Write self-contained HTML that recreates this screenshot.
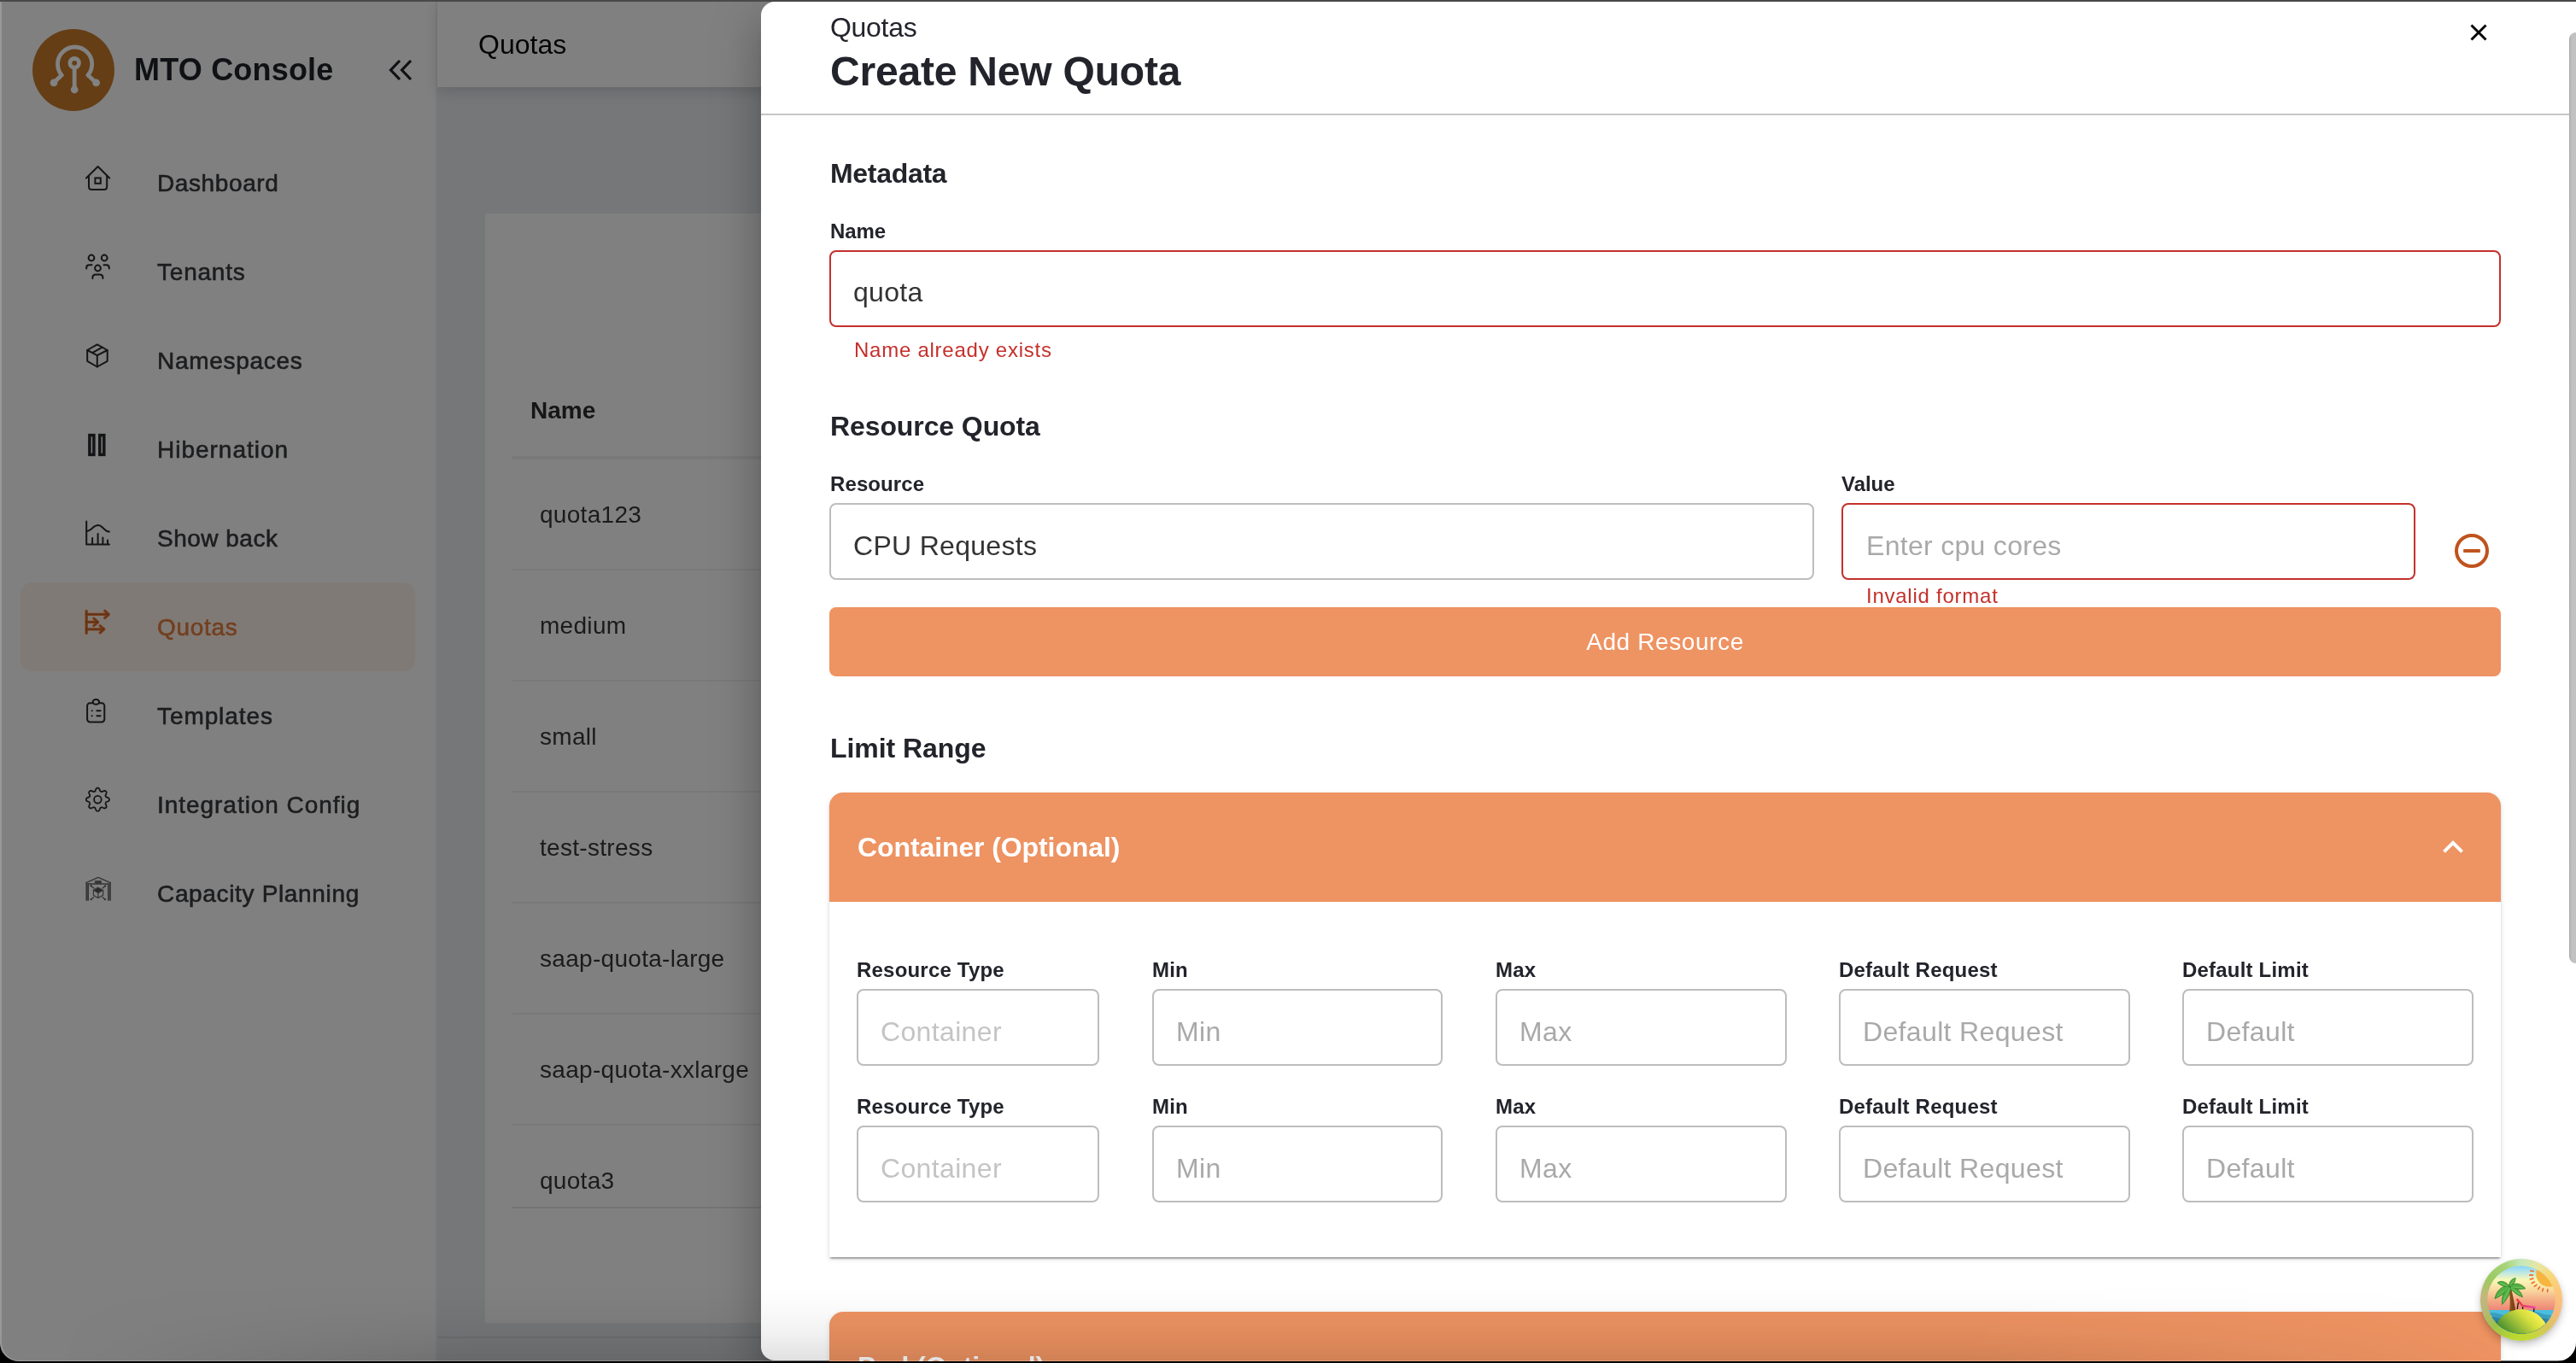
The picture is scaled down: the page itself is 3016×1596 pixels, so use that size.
<!DOCTYPE html>
<html lang="en"><head><meta charset="utf-8"><title>MTO Console - Quotas</title>
<style>
html,body{margin:0;padding:0;background:#000;}
@media (max-width:2000px){html{zoom:0.5;}}
body{width:3016px;height:1596px;overflow:hidden;position:relative;font-family:"Liberation Sans",Arial,Helvetica,sans-serif;}
#win{position:absolute;left:0;top:0;width:3016px;height:1594px;overflow:hidden;background:#757779;border-radius:0 0 22px 22px;}
.t{position:absolute;white-space:nowrap;line-height:1;will-change:transform;}
.b{position:absolute;box-sizing:border-box;}
.bold{font-weight:700;}
.side{color:#1c1d1f;}
.dk{color:#23242b;}
.inp{border:2px solid #bdbdbd;border-radius:8px;background:#fff;}
.err{border-color:#c4302b;}
.ph{color:#a9a9a9;}
.phd{color:#c4c4c4;}
.red{color:#c4302b;}
svg{position:absolute;overflow:visible;}
</style></head><body><div id="win">
<div class="b " style="left:0px;top:0px;width:510px;height:1594px;background:#808080;"></div>
<div class="b " style="left:510px;top:0px;width:2px;height:1594px;background:#787a7b;"></div>
<div class="b " style="left:512px;top:0px;width:2504px;height:102px;background:#808080;box-shadow:0 6px 14px rgba(0,0,0,0.13);"></div>
<div class="b " style="left:568px;top:250px;width:2448px;height:1299px;background:#808080;"></div>
<div class="b " style="left:512px;top:1565px;width:2504px;height:2px;background:#6c6e70;"></div>
<svg style="left:38px;top:34px" width="96" height="96" viewBox="0 0 96 96">
<circle cx="48" cy="48" r="48" fill="#653e16"/>
<g fill="none" stroke="#828282" stroke-width="4.8" stroke-linecap="round">
<path d="M34.2 54 A20.1 20.1 0 1 1 65 54"/>
<path d="M34.2 54 L25.2 62.6 M65 54 L74.2 62.6"/>
<circle cx="49.2" cy="39.8" r="5.3"/>
<path d="M49.2 45.5 V70"/>
</g>
<g fill="#828282"><circle cx="25" cy="62.9" r="4.4"/><circle cx="74.6" cy="62.9" r="4.4"/><circle cx="49.2" cy="71" r="4.4"/></g>
</svg>
<div class="t bold" style="left:156.8px;top:63.5px;font-size:36px;color:#101114;letter-spacing:0.2px;">MTO Console</div>
<svg style="left:454px;top:68px" width="32" height="28" viewBox="0 0 32 28" fill="none" stroke="#101114" stroke-width="3.2" stroke-linecap="butt" stroke-linejoin="miter">
<path d="M14 3 L3.5 14 L14 25"/><path d="M27 3 L16.5 14 L27 25"/></svg>
<div class="b " style="left:24px;top:682px;width:462px;height:104px;background:#807a76;border-radius:14px;"></div>
<div class="t side" style="left:184.0px;top:201.3px;font-size:28px;letter-spacing:0.61px;-webkit-text-stroke:0.6px;">Dashboard</div>
<div class="t side" style="left:184.0px;top:305.3px;font-size:28px;letter-spacing:0.78px;-webkit-text-stroke:0.6px;">Tenants</div>
<div class="t side" style="left:184.0px;top:409.3px;font-size:28px;letter-spacing:0.71px;-webkit-text-stroke:0.6px;">Namespaces</div>
<div class="t side" style="left:184.0px;top:513.3px;font-size:28px;letter-spacing:0.99px;-webkit-text-stroke:0.6px;">Hibernation</div>
<div class="t side" style="left:184.0px;top:617.3px;font-size:28px;letter-spacing:0.49px;-webkit-text-stroke:0.6px;">Show back</div>
<div class="t side" style="left:184.0px;top:721.3px;font-size:28px;color:#733f1f;letter-spacing:0.7px;-webkit-text-stroke:0.6px;">Quotas</div>
<div class="t side" style="left:184.0px;top:825.3px;font-size:28px;letter-spacing:0.91px;-webkit-text-stroke:0.6px;">Templates</div>
<div class="t side" style="left:184.0px;top:929.3px;font-size:28px;letter-spacing:0.96px;-webkit-text-stroke:0.6px;">Integration Config</div>
<div class="t side" style="left:184.0px;top:1033.3px;font-size:28px;letter-spacing:0.66px;-webkit-text-stroke:0.6px;">Capacity Planning</div>
<svg style="left:0;top:0" width="520" height="1596" viewBox="0 0 520 1596" fill="none" stroke="#141517" stroke-width="2" stroke-linecap="round" stroke-linejoin="round">
<!-- dashboard -->
<path d="M101 208.5 L114.6 195 L128.2 208.5"/>
<path d="M104 206 V218.5 Q104 222 107.5 222 H121.7 Q125.2 222 125.2 218.5 V206"/>
<rect x="111.4" y="208.4" width="6.4" height="6.4" stroke-linejoin="miter"/>
<!-- tenants -->
<circle cx="107" cy="302" r="3.4"/><circle cx="122.2" cy="302" r="3.4"/><circle cx="114.5" cy="314" r="3.4"/>
<path d="M101.2 314.6 V313.5 Q101.2 310.3 104.6 310.3 H107.5"/>
<path d="M127.8 314.6 V313.5 Q127.8 310.3 124.4 310.3 H121.5"/>
<path d="M108.4 326 V325 Q108.4 321.4 112 321.4 H117 Q120.4 321.4 120.4 325 V326"/>
<!-- namespaces -->
<path d="M113.8 403.4 L125.7 410 V422.8 L113.8 429.5 L102.2 422.8 V410 Z"/>
<path d="M102.2 410 L113.8 416.2 L125.7 410 M113.8 416.2 V429.5 M108 413.1 L119.75 406.7"/>
<!-- hibernation -->
<g stroke-width="3.5" stroke-linejoin="miter" stroke-linecap="butt"><rect x="104.9" y="509.6" width="5" height="22.8"/><rect x="116.8" y="509.6" width="5" height="22.8"/></g>
<!-- show back -->
<path d="M101.2 610.5 V637.4 H128"/>
<path d="M108.1 630 V637 M114.6 625 V637 M120.4 629.4 V637 M126 632.5 V637"/>
<path d="M101.2 622 C107 622 109 615 114.8 615 C120.5 615 122 622.6 128 622.6"/>
<!-- quotas -->
<g stroke="#7a3d17" stroke-width="3.3">
<path d="M101.2 715.4 V741.4"/>
<path d="M101.2 719.4 H127 M122.7 715.3 L127.3 719.4 L122.7 723.5"/>
<path d="M101.2 728.4 H114.4 M109.9 724.2 L114.7 728.4 L109.9 732.6"/>
<path d="M101.2 736.8 H121.6 M117.1 732.7 L121.9 736.8 L117.1 740.9"/>
</g>
<g stroke="#52301c" stroke-width="0.9">
<path d="M101.2 715.4 V741.4"/>
<path d="M101.2 719.4 H127 M122.7 715.3 L127.3 719.4 L122.7 723.5"/>
<path d="M101.2 728.4 H114.4 M109.9 724.2 L114.7 728.4 L109.9 732.6"/>
<path d="M101.2 736.8 H121.6 M117.1 732.7 L121.9 736.8 L117.1 740.9"/>
</g>
<!-- templates -->
<rect x="102.1" y="823.3" width="20.2" height="22.1" rx="3.3"/>
<ellipse cx="112.4" cy="821.9" rx="3.7" ry="2.9" fill="#808080"/>
<path d="M107.7 832.3 h0.1 M107.7 838.2 h0.1 M113.4 832.3 H117.6 M113.4 838.2 H117.6"/>
<!-- gear -->
<circle cx="114.4" cy="936.2" r="4.3" stroke-width="1.8"/>
<path stroke-width="1.8" d="M114.40 922.70 L114.84 922.71 L115.28 922.73 L115.70 922.96 L116.08 923.45 L116.41 924.01 L116.70 924.63 L116.95 925.24 L117.18 925.83 L117.39 926.35 L117.65 926.64 L117.96 926.75 L118.27 926.87 L118.57 927.00 L118.87 927.14 L119.25 927.12 L119.77 926.90 L120.34 926.65 L120.96 926.39 L121.59 926.16 L122.23 926.00 L122.84 925.92 L123.30 926.05 L123.63 926.35 L123.95 926.65 L124.25 926.97 L124.55 927.30 L124.68 927.76 L124.60 928.37 L124.44 929.01 L124.21 929.64 L123.95 930.26 L123.70 930.83 L123.48 931.35 L123.46 931.73 L123.60 932.03 L123.73 932.33 L123.85 932.64 L123.96 932.95 L124.25 933.21 L124.77 933.42 L125.36 933.65 L125.97 933.90 L126.59 934.19 L127.15 934.52 L127.64 934.90 L127.87 935.32 L127.89 935.76 L127.90 936.20 L127.89 936.64 L127.87 937.08 L127.64 937.50 L127.15 937.88 L126.59 938.21 L125.97 938.50 L125.36 938.75 L124.77 938.98 L124.25 939.19 L123.96 939.45 L123.85 939.76 L123.73 940.07 L123.60 940.37 L123.46 940.67 L123.48 941.05 L123.70 941.57 L123.95 942.14 L124.21 942.76 L124.44 943.39 L124.60 944.03 L124.68 944.64 L124.55 945.10 L124.25 945.43 L123.95 945.75 L123.63 946.05 L123.30 946.35 L122.84 946.48 L122.23 946.40 L121.59 946.24 L120.96 946.01 L120.34 945.75 L119.77 945.50 L119.25 945.28 L118.87 945.26 L118.57 945.40 L118.27 945.53 L117.96 945.65 L117.65 945.76 L117.39 946.05 L117.18 946.57 L116.95 947.16 L116.70 947.77 L116.41 948.39 L116.08 948.95 L115.70 949.44 L115.28 949.67 L114.84 949.69 L114.40 949.70 L113.96 949.69 L113.52 949.67 L113.10 949.44 L112.72 948.95 L112.39 948.39 L112.10 947.77 L111.85 947.16 L111.62 946.57 L111.41 946.05 L111.15 945.76 L110.84 945.65 L110.53 945.53 L110.23 945.40 L109.93 945.26 L109.55 945.28 L109.03 945.50 L108.46 945.75 L107.84 946.01 L107.21 946.24 L106.57 946.40 L105.96 946.48 L105.50 946.35 L105.17 946.05 L104.85 945.75 L104.55 945.43 L104.25 945.10 L104.12 944.64 L104.20 944.03 L104.36 943.39 L104.59 942.76 L104.85 942.14 L105.10 941.57 L105.32 941.05 L105.34 940.67 L105.20 940.37 L105.07 940.07 L104.95 939.76 L104.84 939.45 L104.55 939.19 L104.03 938.98 L103.44 938.75 L102.83 938.50 L102.21 938.21 L101.65 937.88 L101.16 937.50 L100.93 937.08 L100.91 936.64 L100.90 936.20 L100.91 935.76 L100.93 935.32 L101.16 934.90 L101.65 934.52 L102.21 934.19 L102.83 933.90 L103.44 933.65 L104.03 933.42 L104.55 933.21 L104.84 932.95 L104.95 932.64 L105.07 932.33 L105.20 932.03 L105.34 931.73 L105.32 931.35 L105.10 930.83 L104.85 930.26 L104.59 929.64 L104.36 929.01 L104.20 928.37 L104.12 927.76 L104.25 927.30 L104.55 926.97 L104.85 926.65 L105.17 926.35 L105.50 926.05 L105.96 925.92 L106.57 926.00 L107.21 926.16 L107.84 926.39 L108.46 926.65 L109.03 926.90 L109.55 927.12 L109.93 927.14 L110.23 927.00 L110.53 926.87 L110.84 926.75 L111.15 926.64 L111.41 926.35 L111.62 925.83 L111.85 925.24 L112.10 924.63 L112.39 924.01 L112.72 923.45 L113.10 922.96 L113.52 922.73 L113.96 922.71 L114.40 922.70 Z"/>
<!-- capacity -->
<g stroke="#353535" stroke-width="1.5" stroke-linecap="round" stroke-linejoin="round">
<path d="M101 1033.6 L114.9 1027.4 L129.3 1033.6"/>
<path d="M101.3 1034 V1054 M103.2 1035 V1054 M126.9 1035 V1054 M129 1034 V1054" stroke-width="1.7"/>
<path d="M103.2 1035 H126.9" stroke-width="1.3"/>
<rect x="111.5" y="1031.6" width="7" height="2.6" fill="#353535" stroke-width="0.8"/>
<path d="M114.9 1039.2 L120.7 1042.4 L114.9 1045.7 L109.4 1042.4 Z" fill="#2b2b2b" stroke-width="1"/>
<path d="M109.4 1042.4 V1048.3 L114.9 1051.5 L120.7 1048.3 V1042.4 M114.9 1045.7 V1051.5" stroke-width="1.2"/>
<path d="M110 1040 L106.6 1037.3 M120.1 1040 L123.1 1037.4 M109.8 1050.6 L106.7 1053.1 M120.1 1050.6 L122.9 1053.1" stroke-width="1.3"/>
<g fill="#353535" stroke="none"><circle cx="106.6" cy="1037.3" r="1.2"/><circle cx="123.1" cy="1037.4" r="1.2"/><circle cx="106.7" cy="1053.1" r="1.2"/><circle cx="122.9" cy="1053.1" r="1.2"/></g>
</g>
</svg>
<div class="t " style="left:559.5px;top:36.3px;font-size:32px;color:#050505;">Quotas</div>
<div class="t bold" style="left:620.8px;top:467.1px;font-size:28px;color:#161616;">Name</div>
<div class="b " style="left:600px;top:534px;width:2416px;height:4px;background:#797979;"></div>
<div class="t " style="left:632.0px;top:588.5px;font-size:28px;color:#1b1b1b;letter-spacing:0.3px;">quota123</div>
<div class="b " style="left:600px;top:665.5px;width:2416px;height:2.0px;background:#797979;"></div>
<div class="t " style="left:632.0px;top:718.5px;font-size:28px;color:#1b1b1b;letter-spacing:0.3px;">medium</div>
<div class="b " style="left:600px;top:795.5px;width:2416px;height:2.0px;background:#797979;"></div>
<div class="t " style="left:632.0px;top:848.5px;font-size:28px;color:#1b1b1b;letter-spacing:0.3px;">small</div>
<div class="b " style="left:600px;top:925.5px;width:2416px;height:2.0px;background:#797979;"></div>
<div class="t " style="left:632.0px;top:978.5px;font-size:28px;color:#1b1b1b;letter-spacing:0.3px;">test-stress</div>
<div class="b " style="left:600px;top:1055.5px;width:2416px;height:2.0px;background:#797979;"></div>
<div class="t " style="left:632.0px;top:1108.5px;font-size:28px;color:#1b1b1b;letter-spacing:0.3px;">saap-quota-large</div>
<div class="b " style="left:600px;top:1185.5px;width:2416px;height:2.0px;background:#797979;"></div>
<div class="t " style="left:632.0px;top:1238.5px;font-size:28px;color:#1b1b1b;letter-spacing:0.3px;">saap-quota-xxlarge</div>
<div class="b " style="left:600px;top:1315.5px;width:2416px;height:2.0px;background:#797979;"></div>
<div class="t " style="left:632.0px;top:1368.5px;font-size:28px;color:#1b1b1b;letter-spacing:0.3px;">quota3</div>
<div class="b " style="left:600px;top:1413px;width:2416px;height:2px;background:#747474;"></div>
<div class="b" style="left:891px;top:2px;width:2140px;height:1591px;background:#fff;border-radius:16px 0 0 16px;box-shadow:0 16px 20px -10px rgba(0,0,0,0.2),0 32px 48px 4px rgba(0,0,0,0.14),0 12px 60px 10px rgba(0,0,0,0.12);"></div>
<div class="t " style="left:971.8px;top:16.0px;font-size:32px;color:#23242b;letter-spacing:-0.3px;">Quotas</div>
<div class="t bold dk" style="left:971.8px;top:60.0px;font-size:48px;letter-spacing:-0.2px;">Create New Quota</div>
<div class="b " style="left:891px;top:133px;width:2125px;height:2px;background:#c6c6c6;"></div>
<svg style="left:2892px;top:28px" width="20" height="20" viewBox="0 0 20 20" stroke="#000" stroke-width="2.9" fill="none"><path d="M1.5 1.5 L18.5 18.5 M18.5 1.5 L1.5 18.5"/></svg>
<div class="t bold dk" style="left:971.8px;top:186.5px;font-size:32px;letter-spacing:-0.3px;">Metadata</div>
<div class="t bold dk" style="left:971.8px;top:258.5px;font-size:24px;letter-spacing:-0.1px;">Name</div>
<div class="b inp err" style="left:971px;top:293px;width:1957px;height:90px;"></div>
<div class="t " style="left:999.3px;top:326.3px;font-size:32px;color:#333333;letter-spacing:0.3px;">quota</div>
<div class="t red" style="left:1000.0px;top:397.9px;font-size:24px;letter-spacing:0.75px;">Name already exists</div>
<div class="t bold dk" style="left:971.8px;top:483.1px;font-size:32px;letter-spacing:-0.1px;">Resource Quota</div>
<div class="t bold dk" style="left:971.8px;top:555.1px;font-size:24px;letter-spacing:0.1px;">Resource</div>
<div class="t bold dk" style="left:2156.3px;top:554.7px;font-size:24px;letter-spacing:-0.05px;">Value</div>
<div class="b inp" style="left:971px;top:589px;width:1153px;height:90px;"></div>
<div class="t " style="left:999.3px;top:623.0px;font-size:32px;color:#333333;letter-spacing:0.3px;">CPU Requests</div>
<div class="b inp err" style="left:2156px;top:589px;width:672px;height:90px;"></div>
<div class="t ph" style="left:2185.0px;top:622.9px;font-size:32px;letter-spacing:0.3px;">Enter cpu cores</div>
<div class="t red" style="left:2184.8px;top:685.5px;font-size:24px;letter-spacing:0.75px;">Invalid format</div>
<svg style="left:2872px;top:623px" width="44" height="44" viewBox="0 0 44 44" fill="none" stroke="#c0531d" stroke-width="4"><circle cx="22" cy="22" r="18"/><path d="M12.2 22 H31.8"/></svg>
<div class="b " style="left:971px;top:711px;width:1957px;height:80.5px;background:#ee9362;border-radius:8px;"></div>
<div class="t" style="left:971px;width:1957px;text-align:center;top:737.8px;font-size:28px;color:#fff;letter-spacing:0.6px;">Add Resource</div>
<div class="t bold dk" style="left:971.8px;top:859.9px;font-size:32px;letter-spacing:-0.05px;">Limit Range</div>
<div class="b" style="left:971px;top:928px;width:1957px;height:544px;background:#fff;border-radius:16px 16px 0 0;box-shadow:0 4px 2px -2px rgba(0,0,0,0.2),0 2px 2px 0 rgba(0,0,0,0.14),0 2px 6px 0 rgba(0,0,0,0.12);"></div>
<div class="b " style="left:971px;top:928px;width:1957px;height:128px;background:#ee9362;border-radius:16px 16px 0 0;"></div>
<div class="t bold" style="left:1004.0px;top:975.9px;font-size:32px;color:#fff;letter-spacing:-0.1px;">Container (Optional)</div>
<svg style="left:2848px;top:968px" width="48" height="48" viewBox="0 0 24 24" fill="#fff"><path d="M12 8l-6 6 1.41 1.41L12 10.83l4.59 4.58L18 14z"/></svg>
<div class="t bold dk" style="left:1003.3px;top:1124.0px;font-size:24px;letter-spacing:0.2px;">Resource Type</div>
<div class="b inp" style="left:1003px;top:1158px;width:284px;height:90px;"></div>
<div class="t phd" style="left:1030.6px;top:1191.5px;font-size:32px;letter-spacing:0.35px;">Container</div>
<div class="t bold dk" style="left:1349.3px;top:1124.0px;font-size:24px;letter-spacing:0.2px;">Min</div>
<div class="b inp" style="left:1349px;top:1158px;width:340px;height:90px;"></div>
<div class="t ph" style="left:1376.6px;top:1191.5px;font-size:32px;letter-spacing:0.35px;">Min</div>
<div class="t bold dk" style="left:1751.3px;top:1124.0px;font-size:24px;letter-spacing:0.2px;">Max</div>
<div class="b inp" style="left:1751px;top:1158px;width:341px;height:90px;"></div>
<div class="t ph" style="left:1778.6px;top:1191.5px;font-size:32px;letter-spacing:0.35px;">Max</div>
<div class="t bold dk" style="left:2153.3px;top:1124.0px;font-size:24px;letter-spacing:0.2px;">Default Request</div>
<div class="b inp" style="left:2153px;top:1158px;width:341px;height:90px;"></div>
<div class="t ph" style="left:2180.6px;top:1191.5px;font-size:32px;letter-spacing:0.35px;">Default Request</div>
<div class="t bold dk" style="left:2555.3px;top:1124.0px;font-size:24px;letter-spacing:0.2px;">Default Limit</div>
<div class="b inp" style="left:2555px;top:1158px;width:341px;height:90px;"></div>
<div class="t ph" style="left:2582.6px;top:1191.5px;font-size:32px;letter-spacing:0.35px;">Default</div>
<div class="t bold dk" style="left:1003.3px;top:1284.0px;font-size:24px;letter-spacing:0.2px;">Resource Type</div>
<div class="b inp" style="left:1003px;top:1318px;width:284px;height:90px;"></div>
<div class="t phd" style="left:1030.6px;top:1351.5px;font-size:32px;letter-spacing:0.35px;">Container</div>
<div class="t bold dk" style="left:1349.3px;top:1284.0px;font-size:24px;letter-spacing:0.2px;">Min</div>
<div class="b inp" style="left:1349px;top:1318px;width:340px;height:90px;"></div>
<div class="t ph" style="left:1376.6px;top:1351.5px;font-size:32px;letter-spacing:0.35px;">Min</div>
<div class="t bold dk" style="left:1751.3px;top:1284.0px;font-size:24px;letter-spacing:0.2px;">Max</div>
<div class="b inp" style="left:1751px;top:1318px;width:341px;height:90px;"></div>
<div class="t ph" style="left:1778.6px;top:1351.5px;font-size:32px;letter-spacing:0.35px;">Max</div>
<div class="t bold dk" style="left:2153.3px;top:1284.0px;font-size:24px;letter-spacing:0.2px;">Default Request</div>
<div class="b inp" style="left:2153px;top:1318px;width:341px;height:90px;"></div>
<div class="t ph" style="left:2180.6px;top:1351.5px;font-size:32px;letter-spacing:0.35px;">Default Request</div>
<div class="t bold dk" style="left:2555.3px;top:1284.0px;font-size:24px;letter-spacing:0.2px;">Default Limit</div>
<div class="b inp" style="left:2555px;top:1318px;width:341px;height:90px;"></div>
<div class="t ph" style="left:2582.6px;top:1351.5px;font-size:32px;letter-spacing:0.35px;">Default</div>
<div class="b " style="left:971px;top:1536px;width:1957px;height:128px;background:#ee9362;border-radius:16px 16px 0 0;box-shadow:0 2px 6px rgba(0,0,0,0.12);"></div>
<div class="t bold" style="left:1004.0px;top:1583.9px;font-size:32px;color:#fff;letter-spacing:-0.1px;">Pod (Optional)</div>
<div class="b " style="left:0px;top:1506px;width:3016px;height:88px;background:linear-gradient(to bottom,rgba(0,0,0,0) 0,rgba(0,0,0,0.02) 32%,rgba(0,0,0,0.055) 64%,rgba(0,0,0,0.12) 100%);-webkit-mask-image:linear-gradient(to right,transparent 70px,#000 560px,#000 2300px,transparent 2960px);mask-image:linear-gradient(to right,transparent 70px,#000 560px,#000 2300px,transparent 2960px);pointer-events:none;"></div>
<div class="b " style="left:3008px;top:38px;width:16px;height:1090px;background:linear-gradient(to right,#ababab 0,#c1c1c1 3px,#c3c3c3 100%);border-radius:8px;"></div>
<div class="b" style="left:2904px;top:1474px;width:96px;height:96px;border-radius:50%;box-shadow:0 5px 10px rgba(0,0,0,0.22),0 1px 3px rgba(0,0,0,0.12);background:conic-gradient(from 0deg,#c6e8bb 0deg,#e9e6a0 28deg,#f8d77a 50deg,#fdc27c 85deg,#f5b980 110deg,#d9c45e 135deg,#c3d838 165deg,#bcd82f 190deg,#9cc24a 225deg,#b9b878 255deg,#c3b77c 275deg,#9ccb62 305deg,#a6d478 335deg,#c6e8bb 360deg);"></div>
<svg style="left:2904px;top:1474px" width="96" height="96" viewBox="0 0 96 96">
<defs>
<linearGradient id="sky" x1="0" y1="0" x2="0" y2="1"><stop offset="0" stop-color="#86d3fa"/><stop offset="0.14" stop-color="#b9e6e6"/><stop offset="0.30" stop-color="#f8f8b8"/><stop offset="0.52" stop-color="#f9d9a0"/><stop offset="0.75" stop-color="#f3a884"/><stop offset="0.95" stop-color="#ee8577"/></linearGradient>
<linearGradient id="isl" gradientUnits="userSpaceOnUse" x1="66" y1="60" x2="34" y2="92"><stop offset="0" stop-color="#fff552"/><stop offset="0.35" stop-color="#d2dd3e"/><stop offset="0.7" stop-color="#88b437"/><stop offset="1" stop-color="#448d2f"/></linearGradient>
<linearGradient id="trunk" x1="0" y1="0" x2="1" y2="0"><stop offset="0" stop-color="#9a5a1c"/><stop offset="1" stop-color="#6b3a10"/></linearGradient>
<linearGradient id="chair" x1="0" y1="0" x2="1" y2="0"><stop offset="0" stop-color="#ea3a3a"/><stop offset="1" stop-color="#f046a8"/></linearGradient>
<clipPath id="inner"><circle cx="48" cy="48" r="39.8"/></clipPath>
</defs>
<g clip-path="url(#inner)">
<rect x="0" y="8" width="96" height="55" fill="url(#sky)"/>
<circle cx="80.5" cy="17.5" r="15.3" fill="#f5b53f"/>
<g stroke="#f0682a" stroke-width="1.7" stroke-linecap="round"><path d="M58.6 14 l3.6 0.5 M57.8 19.2 l3.6 -0.1 M58.3 24 l3.5 -0.8 M60.2 28.6 l3.2 -1.5 M63.3 32.4 l2.6 -2 M67.6 35.6 l1.9 -2.6 M72.6 37.8 l1 -2.8 M78.6 38.6 l0.2 -2.8"/></g>
<rect x="0" y="60" width="96" height="40" fill="#48bfe0"/>
<path d="M0 66 Q12 60.5 24 65 T48 65 Q60 60 70 63.5 T96 66 V96 H0Z" fill="#3a9fbe"/>
<path d="M0 71 Q12 65.5 24 70 T48 70 Q60 65 70 68.5 T96 71 V96 H0Z" fill="#2d7fa3"/>
<path d="M0 76 Q12 70.5 24 75 T48 75 Q60 70 70 73.5 T96 76 V96 H0Z" fill="#1e5a7d"/>
<path d="M34.2 62 C35.4 51 34.6 40 32.6 30.5 L35.2 30 C37.6 41 40 52 41.4 62 Z" fill="url(#trunk)"/>
<g fill="#55b043" stroke="#2f8a2c" stroke-width="0.9" stroke-linejoin="round">
<path d="M33.6 31.5 C29 26 24 25.5 20 28 C24 31.5 28.5 33 33.6 33 Z"/>
<path d="M33.4 32 C25 31.5 19 37 17 46.8 C24.5 43.5 30.5 39 34.6 33.6 Z"/>
<path d="M33.6 32.5 C27.5 38 24.5 45 25.6 53.4 C31 48 35 41 35.8 33.6 Z"/>
<path d="M33.8 31.2 C34.4 26 37 23.4 41.2 22.6 C41 27 38.6 30.6 35 33 Z"/>
<path d="M34.8 31.6 C41 27.4 48 29 52.8 34.8 C46.5 36 40.5 35.6 35 33.8 Z"/>
<path d="M35 32.8 C42 33.4 47.6 37.6 49.4 44.8 C43.4 42.6 38.4 38.8 34.6 34.2 Z"/>
</g>
<g stroke="#7fd06a" stroke-width="0.7" fill="none" stroke-linecap="round"><path d="M23 28.4 L32 32 M20.5 43.5 L32.5 34 M27 49.5 L34.2 35 M39.8 24.4 L35 31.6 M49.5 33.9 L36.5 33.2 M46.8 42 L36.4 34.6"/></g>
<path d="M44.4 51.2 L43.2 58.8 M49.4 55.8 L49.8 59 M62.9 57.8 L62.5 62" stroke="#161616" stroke-width="1.3" fill="none"/>
<path d="M43.4 48 L49.4 55 L63.6 57" stroke="url(#chair)" stroke-width="2.6" fill="none" stroke-linecap="round" stroke-linejoin="round"/>
<circle cx="47.7" cy="92" r="33" fill="url(#isl)"/>
</g>
</svg>
<div class="b " style="left:0px;top:0px;width:3016px;height:2px;background:#484a4a;"></div>
<div class="b" style="left:0;top:2px;width:3016px;height:1592px;border-left:2px solid rgba(255,255,255,0.19);border-bottom:1.5px solid rgba(255,255,255,0.22);border-radius:0 0 22px 22px;pointer-events:none;"></div>
</div>
</body></html>
